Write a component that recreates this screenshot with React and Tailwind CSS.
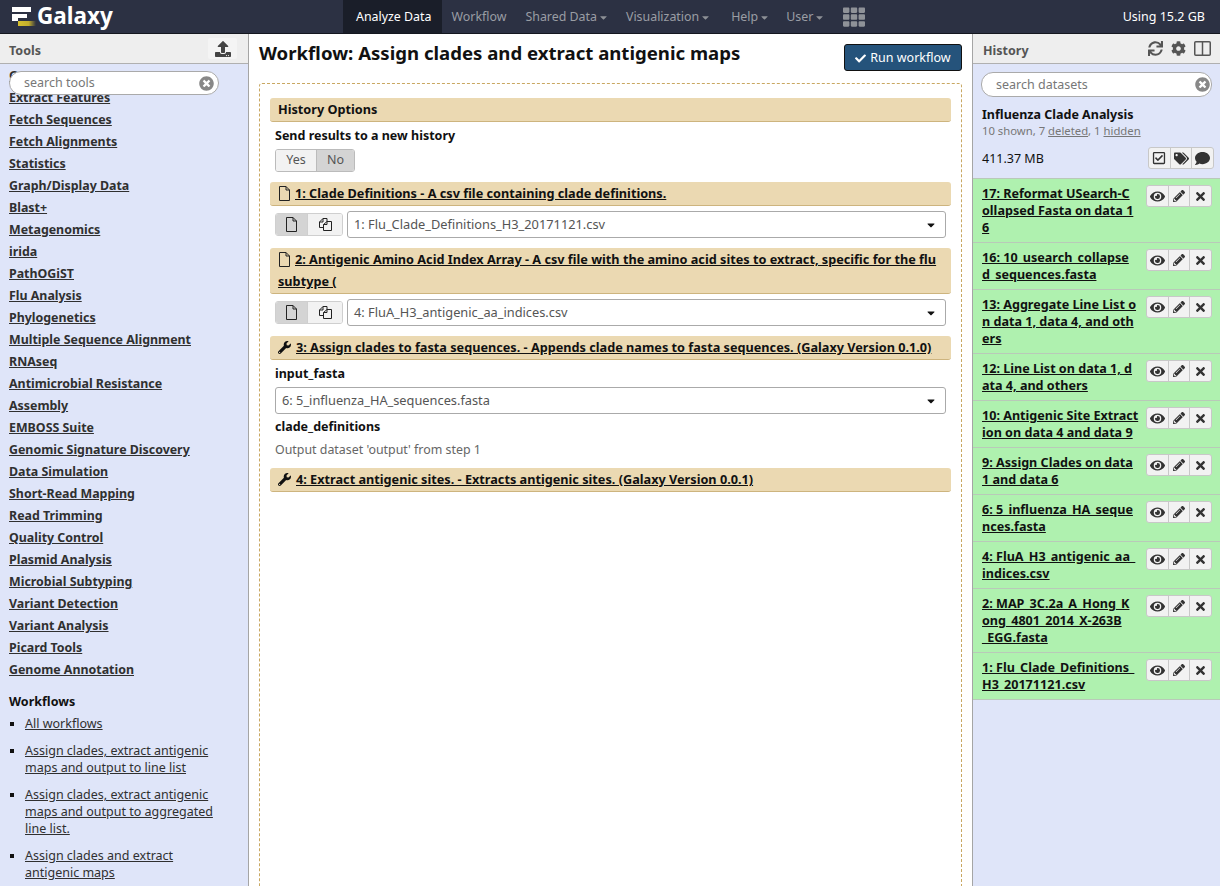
import React from "react";
import { FaUpload, FaSync, FaCog, FaRegCheckSquare, FaTags, FaComment, FaEye, FaPencilAlt, FaTimes, FaCheck, FaWrench, FaTh, FaTimesCircle, FaCaretDown } from "react-icons/fa";

const tools = ["Get Data","Extract Features","Fetch Sequences","Fetch Alignments","Statistics","Graph/Display Data","Blast+","Metagenomics","irida","PathOGiST","Flu Analysis","Phylogenetics","Multiple Sequence Alignment","RNAseq","Antimicrobial Resistance","Assembly","EMBOSS Suite","Genomic Signature Discovery","Data Simulation","Short-Read Mapping","Read Trimming","Quality Control","Plasmid Analysis","Microbial Subtyping","Variant Detection","Variant Analysis","Picard Tools","Genome Annotation"];

const workflows = [
  ["All workflows"],
  ["Assign clades, extract antigenic", "maps and output to line list"],
  ["Assign clades, extract antigenic", "maps and output to aggregated", "line list."],
  ["Assign clades and extract", "antigenic maps"],
];

const history = [
  ["17: Reformat USearch-C", "ollapsed Fasta on data 1", "6"],
  ["16: 10_usearch_collapse", "d_sequences.fasta"],
  ["13: Aggregate Line List o", "n data 1, data 4, and oth", "ers"],
  ["12: Line List on data 1, d", "ata 4, and others"],
  ["10: Antigenic Site Extract", "ion on data 4 and data 9"],
  ["9: Assign Clades on data", "1 and data 6"],
  ["6: 5_influenza_HA_seque", "nces.fasta"],
  ["4: FluA_H3_antigenic_aa_", "indices.csv"],
  ["2: MAP_3C.2a_A_Hong_K", "ong_4801_2014_X-263B", "_EGG.fasta"],
  ["1: Flu_Clade_Definitions_", "H3_20171121.csv"],
];

function FileIcon({ className }) {
  return (
    <svg width="13" height="15" viewBox="0 0 13 15" className={className} fill="none" stroke="#222" strokeWidth="1">
      <path d="M1.5 .5H8L11.5 4V14.5H1.5Z" />
      <path d="M8 .5V4H11.5" />
    </svg>
  );
}

function CopyIcon() {
  return (
    <svg width="15" height="15" viewBox="0 0 15 15" fill="none" stroke="#222" strokeWidth="1">
      <path d="M5.5 10.5H1.5V5L5 1.5H9V4.5" />
      <path d="M5 1.5V5H1.5" />
      <path d="M5.5 7.5L9 4.5H13.5V13.5H5.5Z" />
      <path d="M9 4.5V7.5H5.5" />
    </svg>
  );
}

function Nav({ label, caret, className }) {
  return (
    <div className={`flex h-full items-center pt-[1px] text-[#9a9da4] ${className}`}>
      <span>{label}</span>
      {caret && <FaCaretDown className="ml-[1px] text-[11px] text-[#8d9096]" />}
    </div>
  );
}

function StepBar({ children }) {
  return (
    <div className="rounded-[3px] border-b border-[#cdb47e] bg-[#ebd9b2] px-[8px] pb-[1px] text-[12.7px] leading-[22px] font-bold text-[#111]">
      {children}
    </div>
  );
}

function DataSelect({ value }) {
  return (
    <div className="flex h-[27px] min-w-0 flex-1 items-center justify-between rounded-[3px] border border-[#aaaaaa] bg-white pr-[8px] pl-[6px] text-[12.8px] text-[#555]">
      <span className="pt-[1px]">{value}</span>
      <FaCaretDown className="text-[12px] text-[#111]" />
    </div>
  );
}

function DataRow({ value }) {
  return (
    <div className="flex gap-[4px] px-[5px] pt-[5px] pb-[10px]">
      <div className="mt-[2px] flex h-[23px] w-[68px] overflow-hidden rounded-[3px] border border-[#cfcfcf]">
        <div className="flex w-[32px] items-center justify-center border-r border-[#cfcfcf] bg-[#d4d4d4]">
          <FileIcon />
        </div>
        <div className="flex flex-1 items-center justify-center bg-[#f2f2f2]">
          <CopyIcon />
        </div>
      </div>
      <DataSelect value={value} />
    </div>
  );
}

function HistoryItem({ lines }) {
  return (
    <div className="flex items-start justify-between border-b border-[#b9c9b9] bg-[#aff1af] pt-[6px] pr-[8px] pb-[6px] pl-[9px]">
      <div className="text-[12.6px] leading-[17px] font-bold text-[#111] underline">
        {lines.map((l, i) => <div key={i}>{l}</div>)}
      </div>
      <div className="flex h-[22px] w-[66px] shrink-0 overflow-hidden rounded-[3px] border border-[#c8c8c8] bg-[#f2f2f2] text-[#333]">
        <div className="flex flex-1 items-center justify-center border-r border-[#c8c8c8]"><FaEye className="text-[15px]" /></div>
        <div className="flex flex-1 items-center justify-center border-r border-[#c8c8c8]"><FaPencilAlt className="text-[12px]" /></div>
        <div className="flex flex-1 items-center justify-center"><FaTimes className="text-[13px]" /></div>
      </div>
    </div>
  );
}

export default function App() {
  return (
    <div className="flex h-[886px] w-[1220px] flex-col overflow-hidden bg-white text-[12.5px] text-[#111]" style={{ fontFamily: '"Noto Sans", "DejaVu Sans", sans-serif' }}>
      <header className="flex h-[34px] shrink-0 items-stretch border-b border-[#14171f] bg-[#2c3143]">
        <div className="flex w-[343px] items-center pl-[12px]">
          <svg width="25" height="20" viewBox="0 0 25 20">
            <defs>
              <linearGradient id="gold" x1="0" x2="1" y1="0" y2="0">
                <stop offset="0" stopColor="#d6c02e" />
                <stop offset="0.6" stopColor="#c2ad2c" />
                <stop offset="1" stopColor="#2c3143" />
              </linearGradient>
            </defs>
            <rect x="0" y="0" width="19" height="5" fill="#fff" />
            <rect x="0" y="7" width="15" height="4" fill="#fff" />
            <rect x="0" y="11" width="6" height="3" fill="#fff" />
            <rect x="6" y="14" width="18" height="5" fill="url(#gold)" />
          </svg>
          <span className="text-[22.5px] leading-none font-bold text-white">Galaxy</span>
        </div>
        <nav className="flex items-center text-[12.4px]">
          <div className="flex h-full items-center bg-[#1a1e29] pt-[1px] pr-[10px] pl-[13px] text-white">Analyze Data</div>
          <Nav label="Workflow" className="px-[10px]" />
          <Nav label="Shared Data" caret className="px-[9px]" />
          <Nav label="Visualization" caret className="pr-[10px] pl-[8px]" />
          <Nav label="Help" caret className="pr-[6px] pl-[10px]" />
          <Nav label="User" caret className="pr-[9px] pl-[10px]" />
          <FaTh className="ml-[9px] text-[22px] text-[#8f9298]" />
        </nav>
        <div className="ml-auto flex items-center pt-[1px] pr-[15px] text-[12.5px] text-white">Using 15.2 GB</div>
      </header>

      <div className="flex min-h-0 flex-1">
        <aside className="relative flex w-[249px] shrink-0 flex-col border-r border-[#a5a5a5] bg-[#dfe5f9]">
          <div className="flex h-[30px] shrink-0 items-center justify-between border-b border-[#b0b0b0] bg-[#eeeeee] pr-[11px] pl-[9px]">
            <span className="pt-[5px] text-[12.5px] font-bold text-[#555]">Tools</span>
            <div className="flex h-[21px] w-[29px] items-center justify-center rounded-[2px] bg-[#f4f4f4]"><FaUpload className="text-[16px] text-[#444]" /></div>
          </div>
          <div className="absolute top-[37px] left-[9px] z-10 flex h-[24px] w-[210px] items-center justify-between rounded-[12px] border border-[#aaaaaa] bg-white pr-[4px] pl-[14px] text-[12.5px] text-[#777]">
            <span>search tools</span>
            <FaTimesCircle className="text-[15px] text-[#888]" />
          </div>
          <div className="min-h-0 flex-1 overflow-hidden pl-[9px]">
            <div className="mt-[1px] flex flex-col">
              {tools.map((t) => (
                <div key={t} className="h-[22px] text-[12.4px] leading-[22px] font-bold text-[#303030] underline">{t}</div>
              ))}
            </div>
            <div className="mt-[10px] text-[12.5px] leading-[22px] font-bold text-[#111]">Workflows</div>
            <ul className="mt-[2px]">
              {workflows.map((w, i) => (
                <li key={i} className="relative mb-[10px] pl-[16px] text-[12.5px] leading-[17px] text-[#303030] underline">
                  <span className="absolute top-[7px] left-[1px] h-[4px] w-[4px] bg-[#111]" />
                  {w.map((l, j) => <div key={j}>{l}</div>)}
                </li>
              ))}
            </ul>
          </div>
        </aside>

        <main className="flex min-w-0 flex-1 flex-col overflow-hidden pr-[10px] pl-[10px]">
          <div className="flex h-[49px] shrink-0 items-start justify-between pt-[10px]">
            <h1 className="-mt-[1px] text-[18.6px] leading-[20px] font-bold text-[#111]">Workflow: Assign clades and extract antigenic maps</h1>
            <button className="flex h-[27px] w-[118px] items-center justify-center gap-[4px] rounded-[3px] border border-[#111] bg-[#25537b] pt-[1px] text-[12.5px] text-white">
              <FaCheck className="text-[11px]" /> Run workflow
            </button>
          </div>
          <div className="flex-1 rounded-t-[3px] border border-b-0 border-dashed border-[#c9a862] px-[10px] pt-[14px]">
            <StepBar>History Options</StepBar>
            <div className="pt-[6px] pl-[5px] text-[12.5px] leading-[16px] font-bold">Send results to a new history</div>
            <div className="mt-[5px] ml-[5px] flex h-[23px] w-[80px] overflow-hidden rounded-[3px] border border-[#bbbbbb] text-[12.5px] text-[#555]">
              <div className="flex w-[41px] items-center justify-center border-r border-[#bbbbbb] bg-[#f2f2f2]">Yes</div>
              <div className="flex flex-1 items-center justify-center bg-[#d4d4d4]">No</div>
            </div>
            <div className="mt-[10px]">
              <StepBar><FileIcon className="mr-[4px] inline align-[-3px]" /><span className="underline">1: Clade Definitions - A csv file containing clade definitions.</span></StepBar>
            </div>
            <DataRow value="1: Flu_Clade_Definitions_H3_20171121.csv" />
            <StepBar><FileIcon className="mr-[4px] inline align-[-3px]" /><span className="underline">2: Antigenic Amino Acid Index Array - A csv file with the amino acid sites to extract, specific for the flu subtype (</span></StepBar>
            <DataRow value="4: FluA_H3_antigenic_aa_indices.csv" />
            <StepBar><FaWrench className="mr-[5px] inline text-[13px] align-[-2px]" /><span className="underline">3: Assign clades to fasta sequences. - Appends clade names to fasta sequences. (Galaxy Version 0.1.0)</span></StepBar>
            <div className="pt-[5px] pl-[5px] leading-[18px] font-bold">input_fasta</div>
            <div className="flex pt-[4px] pr-[5px] pl-[5px]"><DataSelect value="6: 5_influenza_HA_sequences.fasta" /></div>
            <div className="pt-[4px] pl-[5px] leading-[18px] font-bold">clade_definitions</div>
            <div className="pt-[5px] pb-[9px] pl-[5px] text-[12.4px] leading-[18px] text-[#666]">Output dataset 'output' from step 1</div>
            <StepBar><FaWrench className="mr-[5px] inline text-[13px] align-[-2px]" /><span className="underline">4: Extract antigenic sites. - Extracts antigenic sites. (Galaxy Version 0.0.1)</span></StepBar>
          </div>
        </main>

        <aside className="flex w-[248px] shrink-0 flex-col border-l border-[#a5a5a5] bg-[#dfe5f9]">
          <div className="flex h-[30px] shrink-0 items-center justify-between border-b border-[#b0b0b0] bg-[#eeeeee] pr-[9px] pl-[10px]">
            <span className="pt-[5px] text-[12.5px] font-bold text-[#555]">History</span>
            <div className="flex items-center gap-[8px] text-[#555]">
              <FaSync className="text-[15px]" />
              <FaCog className="text-[15px]" />
              <svg width="17" height="15" viewBox="0 0 17 15" fill="none" stroke="#555" strokeWidth="1.5">
                <rect x=".75" y=".75" width="15.5" height="13.5" rx="1" />
                <path d="M8.5 1V14" />
              </svg>
            </div>
          </div>
          <div className="px-[8px] pt-[8px]">
            <div className="flex h-[25px] items-center justify-between rounded-[12px] border border-[#aaaaaa] bg-white pr-[1px] pl-[14px] text-[12.5px] text-[#777]">
              <span className="pt-[1px]">search datasets</span>
              <FaTimesCircle className="text-[15px] text-[#888]" />
            </div>
          </div>
          <div className="pt-[9px] pl-[9px] text-[12.5px] leading-[18px] font-bold">Influenza Clade Analysis</div>
          <div className="-mt-[1px] pl-[9px] text-[11.3px] leading-[16px] text-[#777]">10 shown, 7 <span className="underline">deleted</span>, 1 <span className="underline">hidden</span></div>
          <div className="flex items-center justify-between pt-[8px] pr-[6px] pb-[9px] pl-[9px]">
            <span className="pt-[2px] text-[12.5px]">411.37 MB</span>
            <div className="flex h-[22px] w-[66px] overflow-hidden rounded-[3px] border border-[#c8c8c8] bg-[#f2f2f2] text-[#333]">
              <div className="flex flex-1 items-center justify-center border-r border-[#c8c8c8]"><FaRegCheckSquare className="text-[14px]" /></div>
              <div className="flex flex-1 items-center justify-center border-r border-[#c8c8c8]"><FaTags className="text-[15px]" /></div>
              <div className="flex flex-1 items-center justify-center"><FaComment className="text-[15px]" /></div>
            </div>
          </div>
          <div className="border-t border-[#b9c9b9]">
            {history.map((h, i) => <HistoryItem key={i} lines={h} />)}
          </div>
        </aside>
      </div>
    </div>
  );
}
